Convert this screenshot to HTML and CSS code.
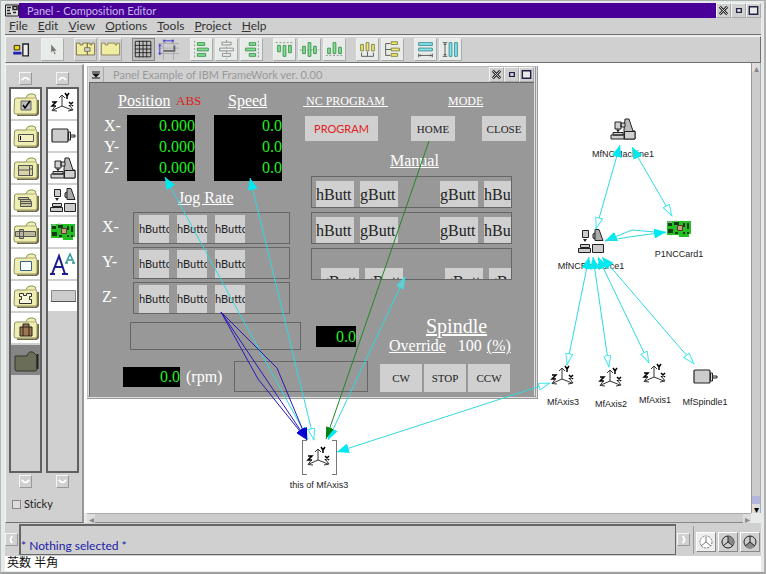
FILE: index.html
```html
<!DOCTYPE html>
<html lang="en">
<head>
<meta charset="utf-8">
<title>Panel - Composition Editor</title>
<link rel="stylesheet" href="styles.css">
</head>
<body>
<svg class="defs" aria-hidden="true">
  <defs>
    <symbol id="axes" viewBox="0 0 26 26"><path d="M12 15V4M9 7l3-3 3 3M12 15l-9 4M5 15.500l-3 4 5 .5M12 15l10 4M20 15l3 4-5 1" fill="none" stroke="#333"/><path d="M15 2l2 3 2-3M17 5v3M2 11h4l-4 4h4M19 11l4 4M23 11l-4 4" fill="none" stroke="#000" stroke-width="1.500"/></symbol>
    <symbol id="motor" viewBox="0 0 26 26"><rect x="2" y="6" width="16" height="13" rx="1" fill="#ccc" stroke="#222" stroke-width="1.200"/><path d="M18.500 9h2v8h-2zM21 12h4v2h-4" fill="#ddd" stroke="#222"/></symbol>
    <symbol id="machine" viewBox="0 0 26 26"><path d="M14 14l1-11h4l4 12h2v8H14z" fill="#bbb" stroke="#222"/><path d="M14.500 15.500H25V23H14.500zM5 6h6v7H5zM11 7h4v4h-4zM1 19h13v4H1zM3 16.500h10v2.500H3z" fill="#d0d0d0" stroke="#222"/><path d="M6 13.500h4l-2 3z" fill="#222"/></symbol>
    <symbol id="resource" viewBox="0 0 26 26"><path d="M17 1.500h4l4 11h-8zM17 5l-2 1v4l2 1" fill="#aaa" stroke="#222"/><path d="M4.500 2.500h6v7h-6zM14.500 16.500h11v8h-11zM.500 20.500h12v4H.500zM2.500 16.500h9v3h-9z" fill="#ccc" stroke="#222"/><path d="M5 11h4l-2 3z" fill="#222"/></symbol>
    <symbol id="card" viewBox="0 0 26 18"><path d="M1 1h24v13h-2v3H13v-2H1z" fill="#22c022"/><path d="M2 3h4v3H2zM8 2h5v3H8zM2 9h5v4H2zM17 3h2v4h-2zM21 3h2v6h-2zM17 12h2v2h-2zM21 12h2v2h-2zM9 12h3v2H9z" fill="#143c14"/><path d="M11.500 5.500h5v5h-5z" fill="#c8a080" stroke="#633"/><path d="M2 2h4M8 1h3" stroke="#bbb"/></symbol>
    <symbol id="folder" viewBox="0 0 26 24"><path d="M4 23.500h19l2-2V8" fill="none" stroke="#6c6c40" stroke-width="2"/><path d="M1.500 8q0-2 2-2H13q1-4 4-4h3q3 0 3 4 1 1 1 2v12q0 2-2 2h-19q-2 0-2-2z" fill="#eeeeb0" stroke="#90905c"/><path d="M13 6h9" stroke="#b0b078"/></symbol>
    <marker id="solid" markerUnits="userSpaceOnUse" markerWidth="13" markerHeight="10" refX="12" refY="5" orient="auto-start-reverse"><path d="M0 0l12 5-12 5z" fill="#00e8f0"/></marker>
    <marker id="hollow" markerUnits="userSpaceOnUse" markerWidth="13" markerHeight="8" refX="12" refY="4" orient="auto-start-reverse"><path d="M.5.500l11 3.500-11 3.500z" fill="#fff" stroke="#40e8f0"/></marker>
    <marker id="open" markerUnits="userSpaceOnUse" markerWidth="13" markerHeight="8" refX="12" refY="4" orient="auto"><path d="M.5.500l11 3.500-11 3.500z" fill="#70c8cc" stroke="#30e0e8"/></marker>
    <marker id="green" markerUnits="userSpaceOnUse" markerWidth="13" markerHeight="8" refX="12" refY="4" orient="auto"><path d="M0 0l12 4-12 4z" fill="#008010"/></marker>
    <marker id="blue" markerUnits="userSpaceOnUse" markerWidth="13" markerHeight="10" refX="12" refY="5" orient="auto"><path d="M0 0l12 5-12 5z" fill="#0000d8"/></marker>
  </defs>
</svg>

<div class="window">
  <header class="titlebar">
    <svg class="sysicon" viewBox="0 0 14 14"><path d="M.500 1.500h13v11H.500z" fill="#ddd" stroke="#222"/><path d="M2 4h4M2 7h3M2 10h4M8 3h4v3H8zM8 9h3" fill="none" stroke="#222" stroke-width="1.500"/></svg>
    <h1>Panel - Composition Editor</h1>
    <button class="winbtn" aria-label="Close"><svg viewBox="0 0 14 14"><path d="M3 3l8 8M11 3l-8 8" stroke="#333" stroke-width="3"/><path d="M3 3l8 8M11 3l-8 8" stroke="#ccc"/></svg></button>
    <button class="winbtn" aria-label="Minimize"><svg viewBox="0 0 14 14"><path d="M5 5h5v4H5z" fill="#eee" stroke="#224" stroke-width="1.500"/></svg></button>
    <button class="winbtn" aria-label="Maximize"><svg viewBox="0 0 14 14"><path d="M2.500 3h9v8h-9z" fill="#e8e8e8" stroke="#224" stroke-width="1.500"/></svg></button>
  </header>

  <nav class="menubar">
    <a href="#"><u>F</u>ile</a><a href="#"><u>E</u>dit</a><a href="#"><u>V</u>iew</a><a href="#"><u>O</u>ptions</a><a href="#"><u>T</u>ools</a><a href="#"><u>P</u>roject</a><a href="#"><u>H</u>elp</a>
  </nav>

  <div class="toolbar">
    <div class="group run"><button class="flat" aria-label="Run"><svg viewBox="0 0 18 23"><path d="M1 7h6v5H1z" fill="#e8d800" stroke="#222"/><path d="M0 14h9v3H0z" fill="#2020b0"/><path d="M10.500 5.500h6v13h-6z" fill="#eee" stroke="#222" stroke-width="1.500"/></svg></button></div>
    <div class="group"><button class="lit" aria-label="Select"><svg viewBox="0 0 23 23"><path d="M10 6v9l2-2 2 4 1-1-2-3h3z" fill="#777"/></svg></button></div>
    <div class="group">
      <button aria-label="Public interface"><svg viewBox="0 0 23 23"><path d="M1.500 4.500h4v2h3v-2h5v5h-3v4h3v4h-12zM13.500 4.500h3v2h2v-2h3v13h-8v-4h3v-4h-3z" fill="#f0eca0" stroke="#77704c"/></svg></button>
      <button aria-label="Promote feature"><svg viewBox="0 0 23 23"><path d="M1.500 4.500h4v2h3v-2h8v2h2v-2h3v13h-20z" fill="#f0eca0" stroke="#888058"/></svg></button>
    </div>
    <div class="group">
      <button class="pressed" aria-label="Grid"><svg viewBox="0 0 23 23"><path d="M2.500 2.500h17v17h-17zM7 2v18M11 2v18M15 2v18M2 7h18M2 11h18M2 15h18" fill="none" stroke="#222"/></svg></button>
      <button class="flat" aria-label="Snap to grid"><svg viewBox="0 0 23 23"><path d="M0 5h23M0 10h23M0 16h23M6 0v23M17 0v23" stroke="#aaa"/><path d="M6 2h11M8 1L6 2l2 2M15 1l2 1-2 2M2 6v11M1 8l1-2 2 2M1 15l1 2 2-2" fill="none" stroke="#3030d0"/><path d="M6 13h12V7" fill="none" stroke="#666" stroke-width="2"/></svg></button>
    </div>
    <div class="group green">
      <button aria-label="Align left"><svg viewBox="0 0 23 23"><path class="guide" d="M4 2v19"/><path d="M7 4h8v3H7zM7 10h12v3H7zM7 16h9v3H7z"/></svg></button>
      <button class="dim" aria-label="Align center"><svg viewBox="0 0 23 23"><path class="guide" d="M11.500 1v21"/><path d="M6.500 3.500h10v3h-10zM4 10h15v3H4zM7 16h9v3H7z"/></svg></button>
      <button aria-label="Align right"><svg viewBox="0 0 23 23"><path class="guide" d="M19 2v19"/><path d="M9 4h7v3H9zM5 10h11v3H5zM9 16h7v3H9z"/></svg></button>
    </div>
    <div class="group green">
      <button aria-label="Align top"><svg viewBox="0 0 23 23"><path class="guide" d="M2 4h19"/><path d="M4 7h3v7H4zM10 7h3v12h-3zM16 7h3v8h-3z"/></svg></button>
      <button aria-label="Align middle"><svg viewBox="0 0 23 23"><path class="guide" d="M1 12h21"/><path d="M4 8h3v8H4zM10 4h3v15h-3zM16 8h3v8h-3z"/></svg></button>
      <button aria-label="Align bottom"><svg viewBox="0 0 23 23"><path class="guide" d="M2 18h19"/><path d="M4 10h3v6H4zM10 4h3v12h-3zM16 9h3v7h-3z"/></svg></button>
    </div>
    <div class="group yellow">
      <button aria-label="Distribute horizontally"><svg viewBox="0 0 23 23"><path class="line" d="M5 15v4h13v-4M11.500 14v5"/><path d="M4 6h3v7H4zM10 4h3v9h-3zM16 6h3v7h-3z"/></svg></button>
      <button aria-label="Distribute vertically"><svg viewBox="0 0 23 23"><path class="line" d="M9 5H4v13h5M4 11.500h6"/><path d="M10 3h7v3h-7zM10 10h9v3h-9zM10 16h7v3h-7z"/></svg></button>
    </div>
    <div class="group cyan">
      <button aria-label="Match width"><svg viewBox="0 0 23 23"><path class="line" d="M4 16v4M19 16v4M4 18h15M6 17v2M17 17v2"/><path d="M4 4h15v3H4zM4 10h15v3H4z"/></svg></button>
      <button aria-label="Match height"><svg viewBox="0 0 23 23"><path class="line" d="M3 4h5M3 19h5M5.500 4v15M4 6h3M4 17h3"/><path d="M10 4h3v15h-3zM16 4h3v15h-3z"/></svg></button>
    </div>
  </div>

  <main class="workspace">
    <aside class="palette">
      <div class="columns">
        <div class="column">
          <button class="scroll" aria-label="Scroll categories up"><svg viewBox="0 0 12 12"><path d="M2 8q4-6 8 0"/></svg></button>
          <div class="well">
            <button class="part" aria-label="Buttons"><svg viewBox="0 0 26 24"><use href="#folder"/><path d="M8 9h10v9H8z" fill="#bbb" stroke="#666"/><path d="M10 13l2 3 5-7" fill="none" stroke="#000" stroke-width="1.500"/></svg></button>
            <button class="part" aria-label="Data entry"><svg viewBox="0 0 26 24"><use href="#folder"/><path d="M5.500 10.500h15v7h-15z" fill="#f4f0c0" stroke="#555"/><path d="M7.500 12v4" stroke="#000"/></svg></button>
            <button class="part" aria-label="Lists"><svg viewBox="0 0 26 24"><use href="#folder"/><path d="M5.500 9.500h14v10h-14zM5 14h11M16.500 9v10M16 13h3" fill="#d8d4a8" stroke="#555"/></svg></button>
            <button class="part" aria-label="Menus"><svg viewBox="0 0 26 24"><use href="#folder"/><path d="M5.500 9.500h10v2h-10zM7.500 11.500h10v2h-10zM7.500 13.500h11v2h-11zM7.500 15.500h11v3h-11z" fill="#c8c498" stroke="#555"/></svg></button>
            <button class="part" aria-label="Sliders"><svg viewBox="0 0 26 24"><use href="#folder"/><path d="M2.500 11.500h20v5h-20zM6.500 9.500h4v9h-4z" fill="#bbb79b" stroke="#555"/></svg></button>
            <button class="part" aria-label="Canvas"><svg viewBox="0 0 26 24"><use href="#folder"/><path d="M7.500 9.500h11v9h-11z" fill="#fff" stroke="#368"/></svg></button>
            <button class="part" aria-label="Models"><svg viewBox="0 0 26 24"><use href="#folder"/><path d="M6.500 9.500h4v2h3v-2h5v3h-2v3h2v4h-12v-4h2v-3h-2z" fill="#f8f8d8" stroke="#333"/></svg></button>
            <button class="part" aria-label="Other"><svg viewBox="0 0 26 24"><use href="#folder"/><path d="M7 11h12v9H7zM10 11V8h6v3M10 11v9M16 11v9" fill="#a07850" stroke="#222"/></svg></button>
            <button class="part chosen" aria-label="Machine parts"><svg viewBox="0 0 26 24"><path d="M2 8h12q1-5 6-4l4 4v13q0 2-2 2H4q-2 0-2-2z" fill="#6a6e58" stroke="#33362a"/><path d="M24.500 6v15" stroke="#222" stroke-width="2"/></svg></button>
          </div>
          <button class="scroll" aria-label="Scroll categories down"><svg viewBox="0 0 12 12"><path d="M2 4q4 6 8 0"/></svg></button>
        </div>
        <div class="column">
          <button class="scroll" aria-label="Scroll parts up"><svg viewBox="0 0 12 12"><path d="M2 8q4-6 8 0"/></svg></button>
          <div class="well">
            <button class="part" aria-label="Axis"><svg><use href="#axes"/></svg></button>
            <button class="part" aria-label="Spindle"><svg><use href="#motor"/></svg></button>
            <button class="part" aria-label="Machine"><svg><use href="#machine"/></svg></button>
            <button class="part" aria-label="Resource"><svg><use href="#resource"/></svg></button>
            <button class="part" aria-label="Card"><svg><use href="#card"/></svg></button>
            <button class="part" aria-label="Font"><svg viewBox="0 0 26 26"><path d="M2 23l7-18 6 18M5 16h8M0 23h5M12 23h6" fill="none" stroke="#1c1c8c" stroke-width="2"/><path d="M16 12l4-9 4 9M17 9h6M15 12h3M22 12h3" fill="none" stroke="#389898" stroke-width="1.500"/></svg></button>
            <button class="part" aria-label="Button"><svg viewBox="0 0 26 26"><path d="M1.500 7.500h24v11h-24z" fill="#ccc" stroke="#888"/><path d="M1 18.500h25" stroke="#555"/></svg></button>
          </div>
          <button class="scroll" aria-label="Scroll parts down"><svg viewBox="0 0 12 12"><path d="M2 4q4 6 8 0"/></svg></button>
        </div>
      </div>
      <label class="sticky"><input type="checkbox">Sticky</label>
    </aside>

    <div class="editor">
      <div class="canvas">
        <section class="panel">
          <header class="panel-title">
            <svg class="sysicon" viewBox="0 0 14 14"><path d="M3 4h8v1H3zM3 6h8L7 10zM3 10h8v1H3z" fill="#111"/></svg>
            <h2>Panel Example of IBM FrameWork ver. 0.00</h2>
            <button class="winbtn" aria-label="Close panel"><svg viewBox="0 0 14 14"><path d="M3 3l8 8M11 3l-8 8" stroke="#333" stroke-width="3"/><path d="M3 3l8 8M11 3l-8 8" stroke="#ccc"/></svg></button>
            <button class="winbtn" aria-label="Minimize panel"><svg viewBox="0 0 14 14"><path d="M5 5h5v4H5z" fill="#eee" stroke="#224" stroke-width="1.500"/></svg></button>
            <button class="winbtn" aria-label="Maximize panel"><svg viewBox="0 0 14 14"><path d="M2.500 3h9v8h-9z" fill="#e8e8e8" stroke="#224" stroke-width="1.500"/></svg></button>
          </header>
          <div class="panel-body">
            <div class="upper">
              <div class="readings">
                <div class="captions"><u class="position">Position</u><b>ABS</b><u>Speed</u></div>
                <div class="meters">
                  <div class="axis-names"><span>X-</span><span>Y-</span><span>Z-</span></div>
                  <div class="lcd"><span>0.000</span><span>0.000</span><span>0.000</span></div>
                  <div class="lcd"><span>0.0</span><span>0.0</span><span>0.0</span></div>
                </div>
                <div class="jog-title"><u>Jog Rate</u></div>
                <div class="jog">
                  <span>X-</span><div class="frame"><button>hButto</button><button>hButto</button><button>hButto</button></div>
                  <span>Y-</span><div class="frame"><button>hButto</button><button>hButto</button><button>hButto</button></div>
                  <span>Z-</span><div class="frame"><button>hButto</button><button>hButto</button><button>hButto</button></div>
                </div>
              </div>
              <div class="commands">
                <div class="captions"><u class="nc">&nbsp;NC PROGRAM&nbsp;</u><u>MODE</u></div>
                <div class="modes"><button class="program">PROGRAM</button><button>HOME</button><button>CLOSE</button></div>
                <div class="manual-title"><u>Manual</u></div>
                <div class="manual">
                  <div class="frame"><button>hButt</button><button>gButt</button><button class="apart">gButt</button><button>hBut</button></div>
                  <div class="frame"><button>hButt</button><button>gButt</button><button class="apart">gButt</button><button>hBut</button></div>
                  <div class="frame low"><button>gButt</button><button>gButt</button><button class="apart">gButt</button><button>gBut</button></div>
                </div>
              </div>
            </div>
            <div class="lower">
              <div class="gauges">
                <div class="gauge-row first"><div class="frame wide"></div><div class="lcd small"><span>0.0</span></div></div>
                <div class="gauge-row"><div class="lcd rpm"><span>0.0</span></div><span class="unit">(rpm)</span><div class="frame fill"></div></div>
              </div>
              <div class="spindle">
                <div class="spindle-title"><u>Spindle</u></div>
                <div class="override"><u>Override</u><span>100</span><u>(%)</u></div>
                <div class="turns"><button>CW</button><button>STOP</button><button>CCW</button></div>
              </div>
            </div>
          </div>
        </section>

        <div class="node machine"><svg><use href="#machine"/></svg><span>MfNCMachine1</span></div>
        <div class="node resource"><svg><use href="#resource"/></svg><span>MfNCResource1</span></div>
        <div class="node card"><svg><use href="#card"/></svg><span>P1NCCard1</span></div>
        <div class="node axis3"><svg><use href="#axes"/></svg><span>MfAxis3</span></div>
        <div class="node axis2"><svg><use href="#axes"/></svg><span>MfAxis2</span></div>
        <div class="node axis1"><svg><use href="#axes"/></svg><span>MfAxis1</span></div>
        <div class="node spindle1"><svg><use href="#motor"/></svg><span>MfSpindle1</span></div>
        <div class="node self"><div class="bracket"><svg><use href="#axes"/></svg></div><span>this of MfAxis3</span></div>

        <svg class="links" aria-hidden="true">
          <g transform="translate(-84 -62)" fill="none" stroke="#30d8e0">
            <path d="M165 176L308 438" marker-start="url(#solid)" marker-end="url(#hollow)"/>
            <path d="M250 177L314 439" marker-start="url(#solid)" marker-end="url(#hollow)"/>
            <path d="M328 439L405 276" marker-start="url(#solid)" marker-end="url(#open)"/>
            <path d="M337 451L550 382" marker-start="url(#solid)" marker-end="url(#hollow)"/>
            <path d="M620 144L596 228" marker-start="url(#solid)" marker-end="url(#hollow)"/>
            <path d="M632 146L672 215" marker-start="url(#solid)" marker-end="url(#hollow)"/>
            <path d="M605 240L632 229 666 232" marker-start="url(#solid)"/>
            <path d="M605 240L629 236 666 231" marker-end="url(#solid)"/>
            <path d="M589 256L567 364" marker-start="url(#solid)" marker-end="url(#hollow)"/>
            <path d="M593 256L609 366" marker-start="url(#solid)" marker-end="url(#hollow)"/>
            <path d="M598 256L649 362" marker-start="url(#solid)" marker-end="url(#hollow)"/>
            <path d="M602 256L694 363" marker-start="url(#solid)" marker-end="url(#hollow)"/>
            <path d="M429 140L326 438" stroke="#208828" marker-end="url(#green)"/>
            <g stroke="#2818b8">
              <path d="M221 311L277 367 307 439" marker-end="url(#blue)"/>
              <path d="M221 311L307 439" marker-end="url(#blue)"/>
              <path d="M221 311L258 378 307 439"/>
            </g>
          </g>
        </svg>
      </div>
      <div class="vscroll"><button aria-label="Scroll up">▴</button><i></i><button class="on" aria-label="Scroll down">▾</button></div>
      <div class="hscroll"><button aria-label="Scroll left">◂</button><button aria-label="Scroll right">▸</button></div>
    </div>
  </main>

  <div class="status">
    <button class="step" aria-label="Previous message"><svg viewBox="0 0 12 12"><path d="M7 2q-4 4 0 8"/></svg></button>
    <output>* Nothing selected *</output>
    <button class="step" aria-label="Next message"><svg viewBox="0 0 12 12"><path d="M5 2q4 4 0 8"/></svg></button>
    <div class="views">
      <button class="lit" aria-label="Composition"><svg viewBox="0 0 14 14"><circle cx="7" cy="7" r="6" fill="#fff" stroke="#777" stroke-dasharray="2 1"/><path d="M7 2v5l-5 4M7 7l5 4" fill="none" stroke="#777"/></svg></button>
      <button aria-label="Public interface view"><svg viewBox="0 0 14 14"><circle cx="7" cy="7" r="6" fill="#ccc" stroke="#222"/><path d="M7 7V1a6 6 0 0 1 5 9z" fill="#888"/><path d="M7 1v6l-5 4M7 7l5 4" fill="none" stroke="#222"/></svg></button>
      <button aria-label="Script view"><svg viewBox="0 0 14 14"><circle cx="7" cy="7" r="6" fill="#ccc" stroke="#222"/><path d="M7 7l5 4q-5 5-10 0z" fill="#888"/><path d="M7 1v6l-5 4M7 7l5 4" fill="none" stroke="#222"/></svg></button>
    </div>
  </div>
  <footer class="ime" lang="ja">英数 半角</footer>
</div>
</body>
</html>
```
FILE: styles.css
```css
:root {
  --face: #d0d0d0;
  --dark: #707070;
  --light: #f4f4f4;
  --ui: Lato, "Liberation Sans", sans-serif;
  --serif: "Liberation Serif", serif;
}
* { box-sizing: border-box; }
body { margin: 0; background: #e6eae8; font: 12px/16px var(--ui); font-variant-ligatures: none; color: #222; }
button { margin: 0; padding: 0; border: 0; font: inherit; color: inherit; background: var(--face); }
svg { display: block; }
h1, h2 { margin: 0; font-size: 11px; font-weight: normal; flex: 1; white-space: nowrap; }
.defs { position: absolute; width: 0; height: 0; }

.window {
  display: flex; flex-direction: column; min-height: 100vh;
  padding: 2px 3px 1px 4px;
  border-top: 1px solid #aab0ae; border-left: 1px solid #b4bab8; border-right: 2px solid #b0b0b0; border-bottom: 2px solid #a0a0a0;
}
.titlebar { display: flex; height: 15px; background: #480098; color: #c8b8f0; line-height: 15px; }
.titlebar h1 { padding-left: 8px; }
.sysicon { width: 14px; height: 15px; background: var(--face); }
.winbtn { width: 15px; height: 15px; border: 1px solid var(--light); border-right-color: #aaa; border-bottom-color: #aaa; }
.winbtn svg { width: 13px; height: 13px; }

.menubar { display: flex; height: 17px; background: var(--face); border-bottom: 1px solid var(--dark); }
.menubar a { padding: 0 6px 0 4px; color: #333; text-decoration: none; }

.toolbar {
  display: flex; gap: 10px; height: 27px; margin-top: 1px; padding: 1px 6px;
  background: var(--face); border: 1px solid var(--light); border-right-color: var(--dark); border-bottom-color: var(--dark);
}
.group { display: flex; gap: 2px; }
.group button { width: 23px; height: 23px; border: 1px solid #f0f0f0; border-right-color: #aaa; border-bottom-color: #aaa; }
.group .flat { border-color: var(--face); }
.group .lit, .green button, .yellow button, .cyan button { background: #e8ece8; }
.group .pressed { border-color: #888; background: #c0c0c0; }
.group svg { width: 21px; height: 21px; stroke-width: 1; }
.run button { width: 19px; }
.run svg { width: 17px; }
.green path { fill: #80e090; stroke: #409050; }
.green .dim path { fill: #eee; stroke: #888; }
.yellow path { fill: #f0e870; stroke: #808040; }
.cyan path { fill: #80e8f0; stroke: #408890; }
.group .guide { fill: none; stroke: #888; stroke-dasharray: 2 2; }
.group .line { fill: none; stroke: #555; }

.workspace { display: flex; flex: 1; }
.palette {
  flex: none; width: 79px; margin-top: 1px; padding: 7px 3px; background: var(--face);
  border: 1px solid var(--light); border-right: 2px solid #989898; border-bottom-color: var(--dark);
}
.columns { display: flex; gap: 4px; }
.column { flex: 1; display: flex; flex-direction: column; align-items: center; gap: 2px; }
.scroll, .step { width: 13px; height: 13px; border: 1px solid var(--light); border-right-color: #999; border-bottom-color: #999; }
.scroll svg, .step svg { width: 11px; height: 11px; fill: none; stroke: #fff; stroke-width: 2; }
.well { width: 100%; height: 386px; border: 2px solid #606060; display: flex; flex-direction: column; gap: 2px; }
.part { width: 100%; height: 30px; background: #fff; display: flex; align-items: center; justify-content: center; }
.part svg { width: 26px; height: 26px; }
.chosen { background: #858585; }
.sticky { display: flex; align-items: center; gap: 3px; margin: 8px 3px 0; font-size: 11px; }
.sticky input { appearance: none; width: 9px; height: 9px; margin: 0; border: 1px solid #888; background: #ddd; }

.editor { flex: 1; min-width: 0; display: grid; grid-template-columns: 1fr 10px; grid-template-rows: 1fr 10px; }
.canvas { position: relative; overflow: hidden; background: #fff; }
.vscroll { display: flex; flex-direction: column; background: #ccc; border-left: 1px solid #999; border-right: 1px solid #aaa; }
.vscroll i { margin-top: auto; height: 8px; background: #b4b4dc; }
.vscroll button, .hscroll button { height: 9px; width: 8px; line-height: 8px; font-size: 10px; color: #888; background: #ddd; overflow: hidden; }
.vscroll .on { color: #000; }
.hscroll { display: flex; justify-content: space-between; margin-left: 3px; background: #ccc; border-top: 1px solid #aaa; border-bottom: 1px solid #888; }

.panel { position: absolute; left: 3px; top: 3px; width: 451px; border: 1px solid #bbb; border-right: 3px double #999; border-bottom: 3px double #999; background: #e0e0e0; padding: 0 1px; }
.panel-title { display: flex; height: 16px; background: var(--face); border-bottom: 1px solid #666; color: #999; line-height: 15px; }
.panel-title h2 { padding-left: 9px; border-left: 1px solid #aaa; }
.panel-body { background: #989898; border-left: 1px solid #666; font: 16px/20px var(--serif); color: #fff; padding: 8px 0 4px; }
.upper, .lower { display: flex; }
.readings { width: 213px; }
.captions { display: flex; height: 20px; white-space: nowrap; }
.readings .captions { padding-left: 28px; }
.captions .position { width: 58px; }
.captions b { width: 52px; font: 13px/20px var(--serif); color: #e02020; }
.meters { display: flex; padding: 4px 0 0 14px; line-height: 21px; }
.meters span { display: block; }
.axis-names { width: 23px; }
.lcd { width: 68px; background: #000; color: #20f020; text-align: right; }
.meters .lcd { padding-bottom: 3px; }
.lcd + .lcd { margin-left: 19px; }
.jog-title { margin-top: 7px; padding-left: 88px; line-height: 20px; }
.jog { display: grid; grid-template-columns: 31px 157px; row-gap: 3px; padding: 4px 0 0 12px; line-height: 30px; }
.frame { height: 32px; border: 1px solid #666; overflow: hidden; display: flex; }
.jog .frame { padding: 2px 0 0 5px; gap: 8px; }
.panel-body button { overflow: hidden; white-space: nowrap; color: #222; }
.jog button { width: 30px; height: 28px; font: 11px/28px var(--ui); text-align: left; }
.commands { flex: 1; }
.commands .captions { font-size: 12px; }
.commands .nc { width: 145px; }
.modes { display: flex; padding: 5px 0 0 2px; font: 11px/24px var(--serif); }
.modes button { width: 44px; height: 25px; }
.panel-body .program { width: 73px; color: #e02020; font-family: var(--ui); margin-right: 33px; }
.modes button:last-child { margin-left: 27px; }
.manual-title { margin-top: 10px; padding-left: 87px; }
.manual { display: grid; row-gap: 4px; padding: 5px 22px 0 8px; }
.manual .frame { padding: 4px 0 0 4px; gap: 6px; }
.manual button { flex: none; width: 38px; height: 28px; font: 16px/28px var(--serif); text-align: left; }
.manual .apart { margin-left: 36px; }
.manual .low { padding: 19px 0 0 9px; }

.lower { padding-top: 2px; }
.gauges { width: 278px; padding: 6px 0 0 33px; }
.gauge-row { display: flex; align-items: center; height: 31px; }
.gauge-row.first { height: 28px; margin-bottom: 11px; padding-left: 7px; }
.wide { width: 171px; height: 28px; margin-right: 15px; }
.small { width: 40px; line-height: 21px; }
.rpm { width: 57px; }
.unit { padding: 0 12px 0 6px; }
.fill { flex: 1; height: 31px; }
.spindle { padding-left: 12px; white-space: nowrap; }
.spindle-title { padding-left: 46px; font-size: 20px; }
.override { display: flex; padding-left: 9px; }
.override span { margin: 0 5px 0 12px; }
.turns { display: flex; gap: 2px; margin-top: 8px; font: 11px/27px var(--serif); }
.turns button { width: 42px; height: 28px; }

.node { position: absolute; width: 80px; display: flex; flex-direction: column; align-items: center; gap: 6px; font: 9px/12px "Liberation Sans", sans-serif; color: #222; white-space: nowrap; }
.node svg { width: 26px; height: 26px; }
.machine { left: 499px; top: 53px; }
.resource { left: 467px; top: 165px; }
.card { left: 555px; top: 153px; }
.axis3 { left: 439px; top: 301px; }
.axis2 { left: 487px; top: 303px; }
.axis1 { left: 531px; top: 299px; }
.spindle1 { left: 581px; top: 301px; }
.self { left: 195px; top: 377px; gap: 4px; }
.bracket { position: relative; display: flex; justify-content: center; align-items: center; width: 35px; height: 35px; }
.bracket::before, .bracket::after { content: ""; position: absolute; top: 0; bottom: 0; width: 4px; border: 1px solid #777; }
.bracket::before { left: 0; border-right: 0; }
.bracket::after { right: 0; border-left: 0; }
.links { position: absolute; inset: 0; width: 100%; height: 100%; pointer-events: none; }

.status { display: flex; height: 33px; background: var(--face); align-items: center; }
.status output { flex: 1; display: flex; align-items: flex-end; height: 31px; margin: 0 1px; border: 2px solid #666; border-right-width: 1px; border-bottom-width: 1px; color: #2020a8; }
.views { display: flex; gap: 2px; height: 28px; align-items: center; margin-left: 3px; padding: 4px 1px 0 2px; border-left: 1px solid #999; }
.views button { width: 20px; height: 20px; padding: 2px; border: 1px solid #fff; border-right-color: #888; border-bottom-color: #888; }
.views .lit { background: #eee; }
.views svg { width: 14px; height: 14px; }
.ime { height: 15px; background: #fff; padding-left: 2px; font: 12px/15px "Liberation Sans", "Noto Sans CJK JP", sans-serif; color: #111; }
```
